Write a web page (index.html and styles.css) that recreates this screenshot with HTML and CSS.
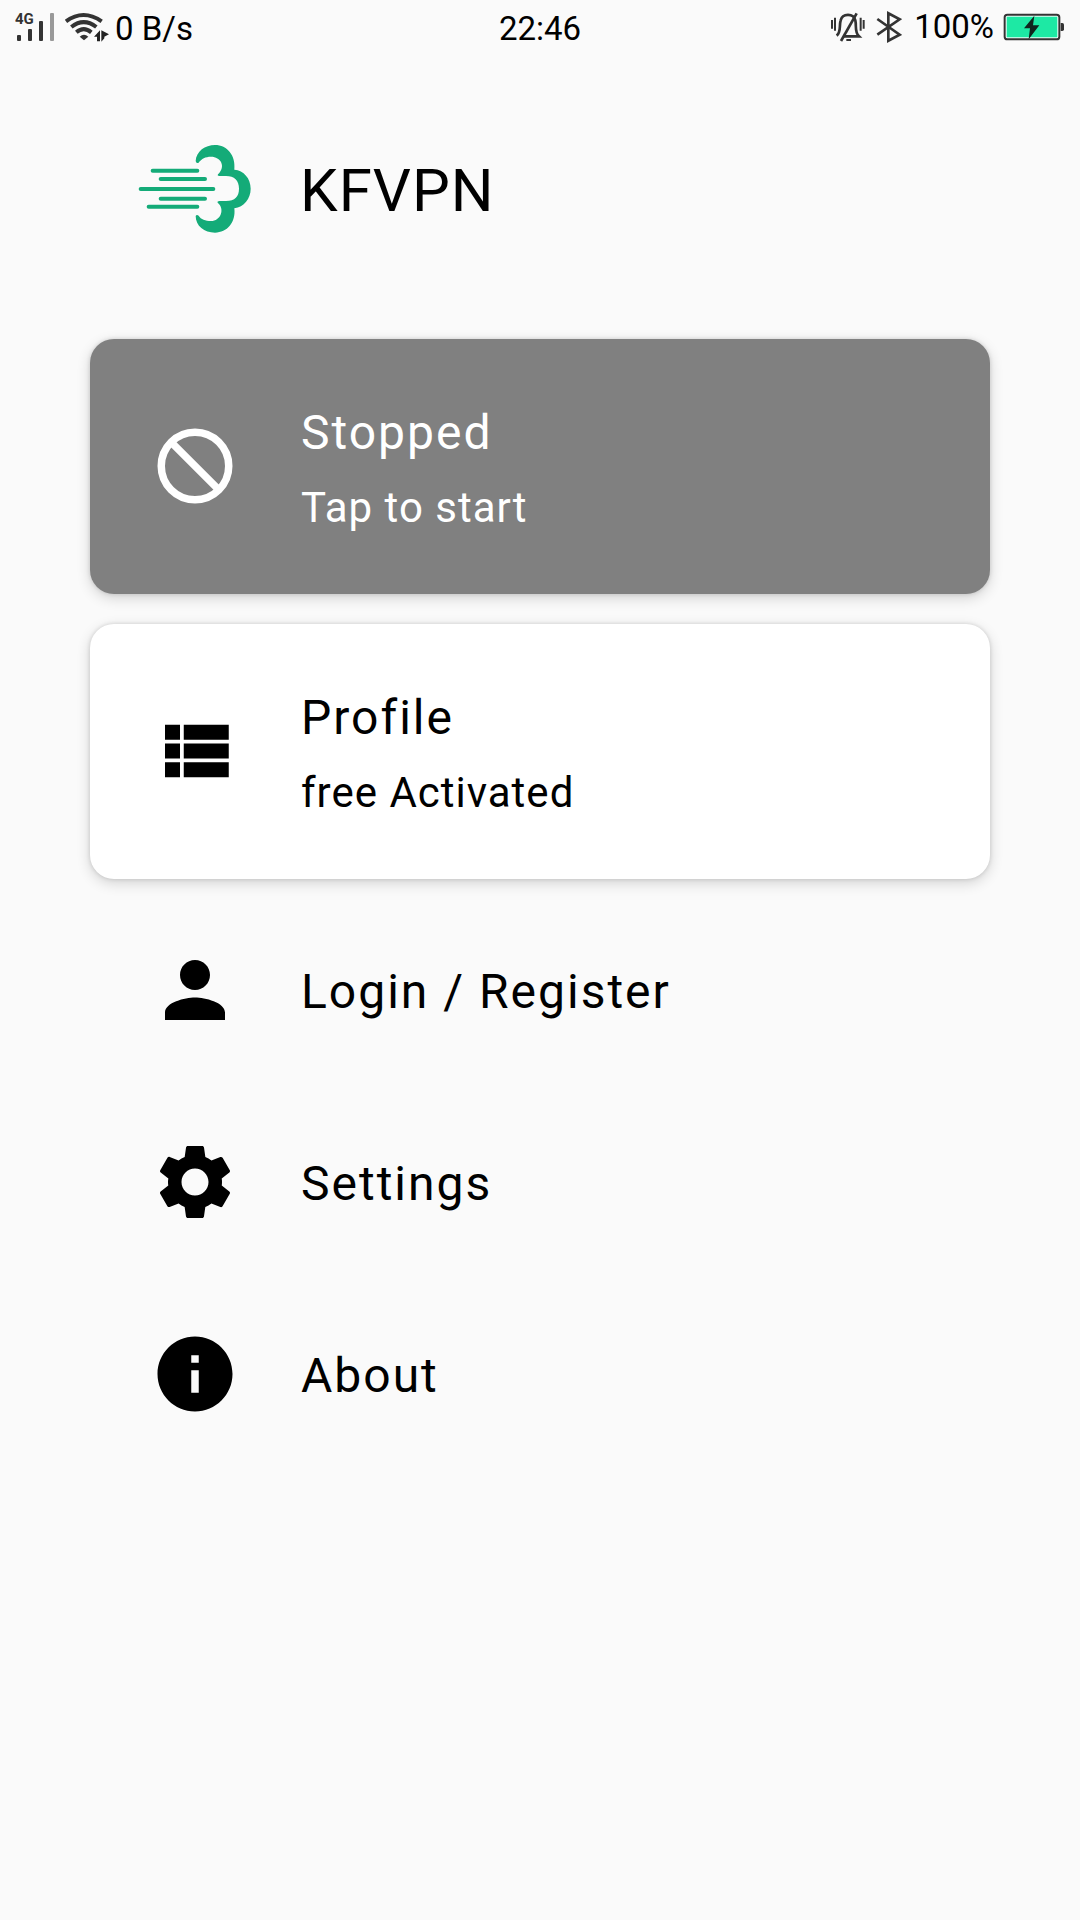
FILE: index.html
```html
<!DOCTYPE html>
<html lang="en">
<head>
    <meta charset="UTF-8">
    <meta name="viewport" content="width=device-width, initial-scale=1.0">
    <title>KFVPN</title>
    <link rel="stylesheet" href="styles.css">
</head>
<body>

    <div class="statusbar">
        <div class="status-left">
            <svg class="signal" viewBox="0 0 40 34" aria-label="4G signal">
                <text x="0" y="14" class="net">4G</text>
                <g fill="#333">
                    <rect x="2" y="25" width="4" height="6" rx="1"/>
                    <rect x="13" y="19" width="4" height="12" rx="1"/>
                    <rect x="24" y="11" width="4" height="20" rx="1"/>
                </g>
                <rect x="35" y="3" width="4" height="28" rx="1" fill="#999"/>
            </svg>
            <svg class="wifi" viewBox="192 33 138 96" aria-label="Wi-Fi">
                <g fill="none" stroke="#333" stroke-width="12">
                    <path d="M198 64Q250 26 305 64"/>
                    <path d="M214 81Q251 52 289 81"/>
                    <path d="M229 97Q251 78 274 97"/>
                </g>
                <path d="M239 110Q252 99 265 110L252 121Z" fill="#333"/>
                <path d="M282 110L300 91V124H291V110ZM304 91L327 103L313 110V115L304 125Z" fill="#222"/>
            </svg>
            <span>0 B/s</span>
        </div>
        <span class="clock">22:46</span>
        <div class="status-right">
            <svg class="bell" viewBox="60 33 108 96" aria-label="Muted">
                <g fill="none" stroke="#333" stroke-width="6">
                    <path d="M66 60V86M75 53V92M152 53V92M161 60V86"/>
                    <path stroke-width="8" d="M80 107C94 96 87 77 92 61C97 39 131 39 136 61C140 78 133 96 147 109H102"/>
                    <path stroke-width="8" d="M140 40L93 123"/>
                    <path d="M109 120H123"/>
                </g>
            </svg>
            <svg class="bluetooth" viewBox="198 33 78 96" aria-label="Bluetooth">
                <path d="M202 57L269 104L235 122V40L269 58L202 104" fill="none" stroke="#333" stroke-width="8"/>
            </svg>
            <span class="percent">100%</span>
            <svg class="battery" viewBox="579 36 186 90" aria-label="Charging">
                <rect x="584" y="44" width="164" height="74" rx="8" fill="#fff" stroke="#333" stroke-width="6"/>
                <rect x="590" y="50" width="152" height="62" fill="#1de9a4"/>
                <path d="M752 69H757Q762 69 762 74V88Q762 93 757 93H752Z" fill="#333"/>
                <path d="M673 47L642 85H660L656 118L688 76H669Z" fill="#10251d"/>
            </svg>
        </div>
    </div>

    <main>
        <header class="header">
            <svg class="logo" viewBox="45 3 360 360" aria-hidden="true">
                <path fill="#14ab78" d="M227 93C229 64 255 45 285 45C321 45 348 76 343 119C371 121 392 145 392 176C392 206 372 231 343 235C348 278 321 308 285 308C253 308 227 288 227 258Q230 252 236 257C243 268 256 273 273 273C302 273 316 237 293 218Q291 213 298 213H318C345 213 357 199 357 176C357 151 343 138 318 138H298Q291 138 294 133C319 109 302 80 273 80C256 80 245 86 236 98Q228 101 227 93Z"/>
                <path stroke="#14ab78" stroke-width="12" stroke-linecap="round" d="M98 122H232M122 147H255M62 177H280M122 206H255M86 230H232"/>
            </svg>
            <h1>KFVPN</h1>
        </header>

        <button type="button" class="card stopped">
            <svg class="icon" viewBox="0 0 24 24" aria-hidden="true">
                <g fill="none" stroke="currentColor" stroke-width="2">
                    <circle cx="12" cy="12" r="9"/>
                    <path d="M5.500 5.500L18.500 18.500"/>
                </g>
            </svg>
            <span class="text">
                <span class="title">Stopped</span>
                <span class="subtitle">Tap to start</span>
            </span>
        </button>

        <button type="button" class="card">
            <svg class="icon" viewBox="0 0 24 24" aria-hidden="true">
                <path d="M4 14h4v-4H4v4zm0 5h4v-4H4v4zM4 9h4V5H4v4zm5 5h12v-4H9v4zm0 5h12v-4H9v4zM9 5v4h12V5H9z"/>
            </svg>
            <span class="text">
                <span class="title">Profile</span>
                <span class="subtitle">free Activated</span>
            </span>
        </button>

        <nav>
            <a href="#login" class="item">
                <svg class="icon" viewBox="0 0 24 24" aria-hidden="true">
                    <path d="M12 12c2.210 0 4-1.790 4-4s-1.790-4-4-4-4 1.790-4 4 1.790 4 4 4zm0 2c-2.670 0-8 1.340-8 4v2h16v-2c0-2.660-5.330-4-8-4z"/>
                </svg>
                <span class="title">Login / Register</span>
            </a>
            <a href="#settings" class="item">
                <svg class="icon" viewBox="0 0 24 24" aria-hidden="true">
                    <path d="M19.140 12.940c.04-.3.060-.61.060-.94 0-.32-.02-.64-.07-.94l2.030-1.580c.18-.14.230-.41.120-.61l-1.920-3.320c-.12-.22-.37-.29-.59-.22l-2.390.96c-.5-.38-1.030-.7-1.620-.94l-.36-2.540c-.04-.24-.24-.41-.48-.41h-3.840c-.24 0-.43.170-.47.410l-.36 2.540c-.59.240-1.130.57-1.620.94l-2.390-.96c-.22-.08-.47 0-.59.220L2.740 8.870c-.12.210-.08.470.120.610l2.030 1.580c-.05.300-.09.630-.09.940s.020.640.070.940l-2.030 1.580c-.18.140-.23.410-.12.610l1.920 3.320c.12.220.37.290.59.220l2.390-.96c.5.380 1.030.7 1.620.94l.36 2.540c.05.240.24.410.48.410h3.840c.24 0 .44-.17.470-.41l.36-2.540c.59-.24 1.130-.56 1.620-.94l2.390.96c.22.080.47 0 .59-.22l1.920-3.320c.12-.22.070-.47-.12-.61l-2.010-1.580zM12 15.600c-1.980 0-3.600-1.620-3.600-3.600s1.620-3.600 3.600-3.600 3.600 1.620 3.600 3.600-1.620 3.600-3.600 3.600z"/>
                </svg>
                <span class="title">Settings</span>
            </a>
            <a href="#about" class="item">
                <svg class="icon" viewBox="0 0 24 24" aria-hidden="true">
                    <path d="M12 2C6.480 2 2 6.480 2 12s4.480 10 10 10 10-4.480 10-10S17.520 2 12 2zm1 15h-2v-6h2v6zm0-8h-2V7h2v2z"/>
                </svg>
                <span class="title">About</span>
            </a>
        </nav>
    </main>

</body>
</html>
```
FILE: styles.css
```css
* {
    box-sizing: border-box;
}

body {
    font-family: Roboto, "Liberation Sans", sans-serif;
    margin: 0;
    min-height: 100vh;
    background-color: #fafafa;
    color: #000;
}

svg {
    display: block;
    flex: none;
}

/* status bar */
.statusbar {
    display: grid;
    grid-template-columns: 1fr auto 1fr;
    align-items: center;
    height: 58px;
    padding: 0 15px;
    font-size: 33px;
    line-height: 40px;
}

.status-left,
.status-right {
    display: flex;
    align-items: center;
}

.status-right {
    justify-content: flex-end;
}

.signal {
    width: 40px;
    height: 34px;
    margin-bottom: 4px;
}

.net {
    font-size: 15px;
    font-weight: 700;
    fill: #333;
}

.wifi {
    width: 46px;
    height: 32px;
    margin: 0 5px 4px 9px;
}

.bell {
    width: 36px;
    height: 32px;
    margin-bottom: 4px;
}

.bluetooth {
    width: 26px;
    height: 32px;
    margin: 0 12px 4px 10px;
}

.battery {
    width: 62px;
    height: 30px;
    margin: 0 0 4px 9px;
}

.percent {
    line-height: 36px;
    padding-bottom: 4px;
}

/* content */
main {
    padding: 0 90px;
}

.header {
    display: flex;
    align-items: center;
    gap: 45px;
    height: 266px;
    padding-left: 45px;
}

.logo {
    width: 120px;
    height: 120px;
}

h1 {
    margin: 0;
    font-size: 60px;
    font-weight: 400;
    line-height: 72px;
    letter-spacing: 1px;
}

.card,
.item {
    display: flex;
    align-items: center;
    gap: 61px;
    width: 100%;
    padding: 0 60px;
    color: #000;
    text-align: left;
    text-decoration: none;
}

.card {
    height: 255px;
    margin: 15px 0 30px;
    padding-bottom: 2px;
    border: none;
    border-radius: 24px;
    background-color: #fff;
    box-shadow: 0 4px 14px rgba(0, 0, 0, 0.16), 0 0 4px rgba(0, 0, 0, 0.14);
    font-family: inherit;
    cursor: pointer;
}

.card + nav {
    margin-top: -15px;
}

.stopped {
    background-color: #808080;
    color: #fff;
}

.item {
    height: 192px;
}

.icon {
    width: 90px;
    height: 90px;
    fill: currentColor;
}

.text {
    display: flex;
    flex-direction: column;
    gap: 20px;
    padding-top: 5px;
}

.title {
    font-size: 48px;
    line-height: 60px;
    letter-spacing: 2px;
}

.item .title {
    padding-top: 3px;
}

.subtitle {
    font-size: 42px;
    line-height: 50px;
    letter-spacing: 1px;
}
```
